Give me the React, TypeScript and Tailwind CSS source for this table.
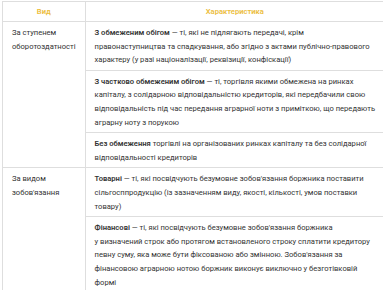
export default function App() {
  const cell = "border border-[#dedede] align-top px-[9px] pt-[4px] pb-[3px] whitespace-nowrap";
  return (
    <div className="w-[383px] h-[290px] overflow-hidden bg-white pl-[2px] pt-[1px]" style={{ fontFamily: 'Roboto, "Noto Sans", sans-serif' }}>
      <table className="border-collapse w-[379px] text-[7.6px] leading-[13.6px] text-[#333]">
        <colgroup>
          <col className="w-[88px]" />
          <col />
        </colgroup>
        <thead>
          <tr className="h-[20px]">
            <th className="border border-[#dedede] text-center font-semibold text-[#ecbd3c]">Вид</th>
            <th className="border border-[#dedede] text-center font-semibold text-[#ecbd3c]">Характеристика</th>
          </tr>
        </thead>
        <tbody>
          <tr>
            <td rowSpan={3} className={cell}>
              За ступенем
              <br />
              оборотоздатності
            </td>
            <td className={cell}>
              <b className="font-semibold">З обмеженим обігом</b> — ті, які не підлягають передачі, крім
              <br />
              правонаступництва та спадкування, або згідно з актами публічно-правового
              <br />
              характеру (у разі націоналізації, реквізиції, конфіскації)
            </td>
          </tr>
          <tr>
            <td className={cell}>
              <b className="font-semibold">З частково обмеженим обігом</b> — ті, торгівля якими обмежена на ринках
              <br />
              капіталу, з солідарною відповідальністю кредиторів, які передбачили свою
              <br />
              відповідальність під час передання аграрної ноти з приміткою, що передають
              <br />
              аграрну ноту з порукою
            </td>
          </tr>
          <tr>
            <td className={cell}>
              <b className="font-semibold">Без обмеження</b> торгівлі на організованих ринках капіталу та без солідарної
              <br />
              відповідальності кредиторів
            </td>
          </tr>
          <tr>
            <td rowSpan={2} className={cell}>
              За видом
              <br />
              зобов'язання
            </td>
            <td className={cell}>
              <b className="font-semibold">Товарні</b> — ті, які посвідчують безумовне зобов'язання боржника поставити
              <br />
              сільгосппродукцію (із зазначенням виду, якості, кількості, умов поставки
              <br />
              товару)
            </td>
          </tr>
          <tr>
            <td className={cell}>
              <b className="font-semibold">Фінансові</b> — ті, які посвідчують безумовне зобов'язання боржника
              <br />
              у визначений строк або протягом встановленого строку сплатити кредитору
              <br />
              певну суму, яка може бути фіксованою або змінною. Зобов'язання за
              <br />
              фінансовою аграрною нотою боржник виконує виключно у безготівковій
              <br />
              формі
            </td>
          </tr>
        </tbody>
      </table>
    </div>
  );
}
